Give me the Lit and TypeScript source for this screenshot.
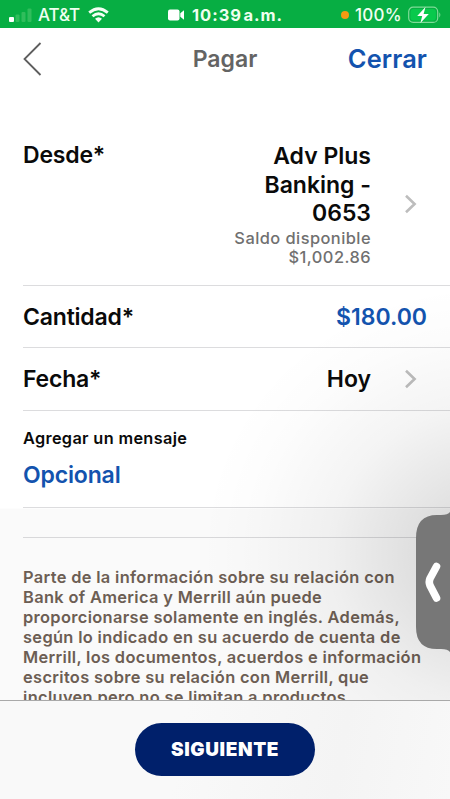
import { LitElement, html, css } from "lit";
import { customElement } from "lit/decorators.js";

const NOTICE = [
  "Parte de la información sobre su relación con",
  "Bank of America y Merrill aún puede",
  "proporcionarse solamente en inglés. Además,",
  "según lo indicado en su acuerdo de cuenta de",
  "Merrill, los documentos, acuerdos e información",
  "escritos sobre su relación con Merrill, que",
  "incluyen pero no se limitan a productos",
];

@customElement("status-bar")
class StatusBar extends LitElement {
  static styles = css`
    :host { display: grid; grid-template-columns: 1fr auto 1fr; align-items: center; height: 28px; padding: 1px 8px 0 9px; box-sizing: border-box; background: #07ae43; color: #effff0; font-size: 16px; line-height: 28px; }
    .left, .mid, .right { display: flex; align-items: center; white-space: nowrap; }
    .right { justify-content: flex-end; }
    .carrier { margin-left: 5px; font-weight: 500; font-size: 17px; letter-spacing: -0.1px; }
    .wifi { margin-left: 8px; }
    .time { margin-left: 7px; font-weight: 700; font-size: 16.5px; letter-spacing: 1px; word-spacing: -3.5px; }
    .dot { width: 8px; height: 8px; border-radius: 50%; background: #f39a12; margin-right: 6px; }
    .pct { font-weight: 500; font-size: 17px; letter-spacing: 0.3px; margin-right: 6px; }
    svg { display: block; }
  `;
  render() {
    return html`
      <div class="left">
        <svg width="24" height="15" viewBox="0 0 24 15">
          <rect x="0" y="9" width="5" height="5" rx="1" fill="#fff" />
          <g fill="#30bd5c"><rect x="6.5" y="6.5" width="4" height="7.5" rx="1" /><rect x="12.5" y="4" width="4" height="10" rx="1" /><rect x="18.5" y="0.5" width="4" height="13.5" rx="1" /></g>
        </svg>
        <span class="carrier">AT&amp;T</span>
        <svg class="wifi" width="21" height="16" viewBox="0 0 21 16">
          <g fill="none" stroke="#f4fff4" stroke-width="2.8"><path d="M1.2 5.6Q10.5 -2.2 19.8 5.6" /><path d="M4.5 9.3Q10.5 4.2 16.5 9.3" /></g>
          <path d="M7 11.8Q10.5 8.8 14 11.8L10.5 15.4Z" fill="#f4fff4" />
        </svg>
      </div>
      <div class="mid">
        <svg width="17" height="12" viewBox="0 0 17 12" fill="#fff"><rect x="0" y="0.5" width="11.5" height="11" rx="2" /><path d="M12.3 4.2L16 1.2V10.8L12.3 7.8Z" /></svg>
        <span class="time">10:39 a.m.</span>
      </div>
      <div class="right">
        <span class="dot"></span><span class="pct">100%</span>
        <svg width="34" height="18" viewBox="0 0 34 18">
          <rect x="0.7" y="1.2" width="29" height="15.2" rx="4.5" fill="none" stroke="#7fdc98" stroke-width="1.2" />
          <rect x="2.5" y="3" width="25.4" height="11.6" rx="3" fill="#08c94c" />
          <path d="M31.3 6.2Q33.4 8.8 31.3 11.4Z" fill="#7fdc98" />
          <path d="M17.5 1L9.2 10H14.2L12.4 17L20.8 7.9H15.6Z" fill="#fff" />
        </svg>
      </div>`;
  }
}

@customElement("app-root")
class AppRoot extends LitElement {
  static styles = css`
    :host { display: flex; flex-direction: column; position: relative; width: 450px; height: 799px; overflow: hidden; font-family: Inter, "Liberation Sans", sans-serif; color: #0a0a0a; background: #fff; }
    .nav { display: grid; grid-template-columns: 1fr auto 1fr; align-items: center; height: 62px; flex: none; padding: 0 23px; font-size: 23px; font-weight: 600; }
    .nav svg { display: block; }
    .title { color: #646464; }
    .close { justify-self: end; color: #1353ae; font-size: 25.4px; letter-spacing: 0.1px; padding-bottom: 2px; }
    .body { display: flex; flex-direction: column; height: 610px; flex: none; overflow: hidden; padding-left: 23px; }
    .row { display: flex; box-sizing: border-box; flex: none; border-bottom: 1px solid #dcdcde; padding-right: 23px; font-size: 23px; font-weight: 600; line-height: 28.5px; }
    .from { height: 196px; padding-top: 51px; }
    .from .value { padding-top: 1px; }
    .amount { height: 62px; align-items: center; padding-top: 2px; }
    .date { height: 63px; align-items: center; padding-top: 1px; }
    .label { flex: 1; letter-spacing: -0.2px; }
    .value { text-align: right; white-space: nowrap; }
    .balance { padding-top: 1px; font-size: 16.4px; line-height: 19.7px; font-weight: 500; color: #707070; letter-spacing: 0.45px; }
    .chev { flex: none; margin-left: 33px; margin-right: 10px; align-self: center; }
    .from .chev { margin-top: -18px; }
    .date .chev { margin-top: -2px; }
    .money, .optional { color: #1353ae; }
    .message { height: 97px; flex-direction: column; padding-top: 13px; }
    .caption { font-size: 16.3px; letter-spacing: 0.34px; line-height: 28px; }
    .optional { margin-top: 9px; letter-spacing: -0.15px; }
    .spacer { height: 30px; }
    .notice { flex: none; padding-top: 28.5px; font-size: 16.4px; line-height: 20.15px; font-weight: 600; color: #6e6055; white-space: nowrap; letter-spacing: 0.34px; }
    .footer { box-sizing: border-box; flex: 1; border-top: 1px solid #a9a9a9; display: flex; justify-content: center; align-items: flex-start; padding-top: 22px; background: linear-gradient(100deg, #f9f9f9 40%, #f4f4f4 75%, #f8f8f8); }
    .next { width: 180px; height: 53px; border: 0; border-radius: 27px; background: #00206b; color: #fff; font: 900 19px/53px Inter, sans-serif; letter-spacing: 0.6px; padding: 0; }
    .shade { position: absolute; inset: 28px 0 99px 0; pointer-events: none; background: radial-gradient(ellipse 290px 270px at 490px 525px, rgba(0,0,0,.16) 0%, rgba(0,0,0,.11) 25%, rgba(0,0,0,.045) 55%, rgba(0,0,0,.012) 82%, transparent 100%), linear-gradient(transparent 480px, rgba(0,0,0,.02) 481px); }
    .handle { position: absolute; right: 0; top: 510px; display: block; }
  `;
  chevron() {
    return html`<svg class="chev" width="13" height="20" viewBox="0 0 13 20"><path d="M2 1.8L10.6 10L2 18.2" fill="none" stroke="#bdbdbd" stroke-width="2.6" /></svg>`;
  }
  render() {
    return html`
      <status-bar></status-bar>
      <div class="nav">
        <svg width="20" height="34" viewBox="0 0 20 34"><path d="M17.5 1L1.5 17L17.5 33" fill="none" stroke="#5e5e5e" stroke-width="1.8" /></svg>
        <span class="title">Pagar</span>
        <span class="close">Cerrar</span>
      </div>
      <div class="body">
        <div class="row from">
          <div class="label">Desde*</div>
          <div class="value">Adv Plus<br />Banking -<br />0653
            <div class="balance">Saldo disponible<br />$1,002.86</div>
          </div>
          ${this.chevron()}
        </div>
        <div class="row amount"><div class="label">Cantidad*</div><div class="value money">$180.00</div></div>
        <div class="row date"><div class="label">Fecha*</div><div class="value">Hoy</div>${this.chevron()}</div>
        <div class="row message"><div class="caption">Agregar un mensaje</div><div class="optional">Opcional</div></div>
        <div class="row spacer"></div>
        <div class="notice">${NOTICE.map((line) => html`<div>${line}</div>`)}</div>
      </div>
      <div class="footer"><button class="next">SIGUIENTE</button></div>
      <div class="shade"></div>
      <svg class="handle" width="34" height="144" viewBox="0 0 34 144">
        <path d="M34 2Q32 5 25 5H21Q0 5 0 28V117Q0 139 21 139H25Q32 139 34 142Z" fill="#777" />
        <path d="M20.5 56.5L14 68.5Q12.5 72 14 75.5L20.5 88" fill="none" stroke="#fff" stroke-width="7.6" stroke-linecap="round" stroke-linejoin="round" />
      </svg>`;
  }
}
